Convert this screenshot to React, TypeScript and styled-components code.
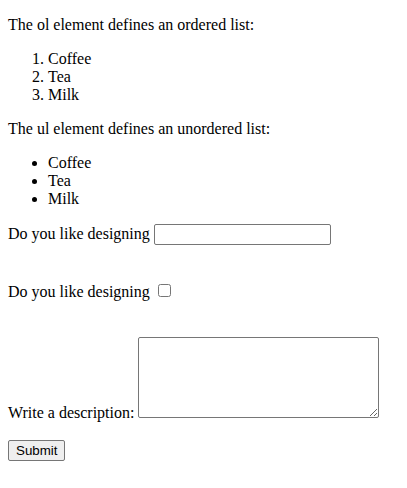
import React from "react";
import styled, { createGlobalStyle } from "styled-components";

const Global = createGlobalStyle`
  html, body { background: #ffffff; }
  body {
    margin: 0 8px;
    font-family: "Liberation Serif", "Times New Roman", serif;
    font-size: 16px;
    line-height: normal;
    color: #000000;
  }
`;

const Para = styled.p`
  margin: 16px 0;
`;

const OrderedList = styled.ol`
  margin: 16px 0;
  padding-left: 40px;
  list-style: decimal;
`;

const BulletList = styled.ul`
  margin: 16px 0;
  padding-left: 40px;
  list-style: disc;
`;

const Item = styled.li``;

const Form = styled.form`
  margin: 0;
`;

const Field = styled.div<{ $after: number }>`
  margin-bottom: ${(p) => p.$after}px;
`;

const Label = styled.label``;

const TextInput = styled.input`
  box-sizing: border-box;
  width: 177px;
  height: 21px;
  margin: 0;
  padding: 1px 2px;
  border: 1px solid #767676;
  border-radius: 2px;
  background: #ffffff;
  font-family: "Liberation Sans", Arial, sans-serif;
  font-size: 13.333px;
`;

const CheckBox = styled.input`
  width: 13px;
  height: 13px;
  margin: 3px 3px 3px 4px;
  vertical-align: baseline;
`;

const TextArea = styled.textarea`
  box-sizing: border-box;
  width: 241px;
  height: 81px;
  margin: 0;
  padding: 2px;
  border: 1px solid #767676;
  border-radius: 2px;
  background: #ffffff;
  font-family: "Liberation Mono", monospace;
  font-size: 13.333px;
  vertical-align: baseline;
`;

const SubmitButton = styled.button`
  box-sizing: border-box;
  height: 21px;
  margin: 0;
  padding: 1px 7px;
  border: 1px solid #767676;
  border-radius: 2px;
  background: #efefef;
  color: #000000;
  font-family: "Liberation Sans", Arial, sans-serif;
  font-size: 13.333px;
  line-height: normal;
`;

export default function App() {
  return (
    <>
      <Global />
      <Para>The ol element defines an ordered list:</Para>
      <OrderedList>
        <Item>Coffee</Item>
        <Item>Tea</Item>
        <Item>Milk</Item>
      </OrderedList>
      <Para>The ul element defines an unordered list:</Para>
      <BulletList>
        <Item>Coffee</Item>
        <Item>Tea</Item>
        <Item>Milk</Item>
      </BulletList>
      <Form onSubmit={(e) => e.preventDefault()}>
        <Field $after={36}>
          <Label htmlFor="design-text">Do you like designing</Label>{" "}
          <TextInput id="design-text" type="text" />
        </Field>
        <Field $after={36}>
          <Label htmlFor="design-check">Do you like designing</Label>{" "}
          <CheckBox id="design-check" type="checkbox" />
        </Field>
        <Field $after={18}>
          <Label htmlFor="desc">Write a description:</Label>{" "}
          <TextArea id="desc" />
        </Field>
        <Field $after={0}>
          <SubmitButton type="submit">Submit</SubmitButton>
        </Field>
      </Form>
    </>
  );
}
